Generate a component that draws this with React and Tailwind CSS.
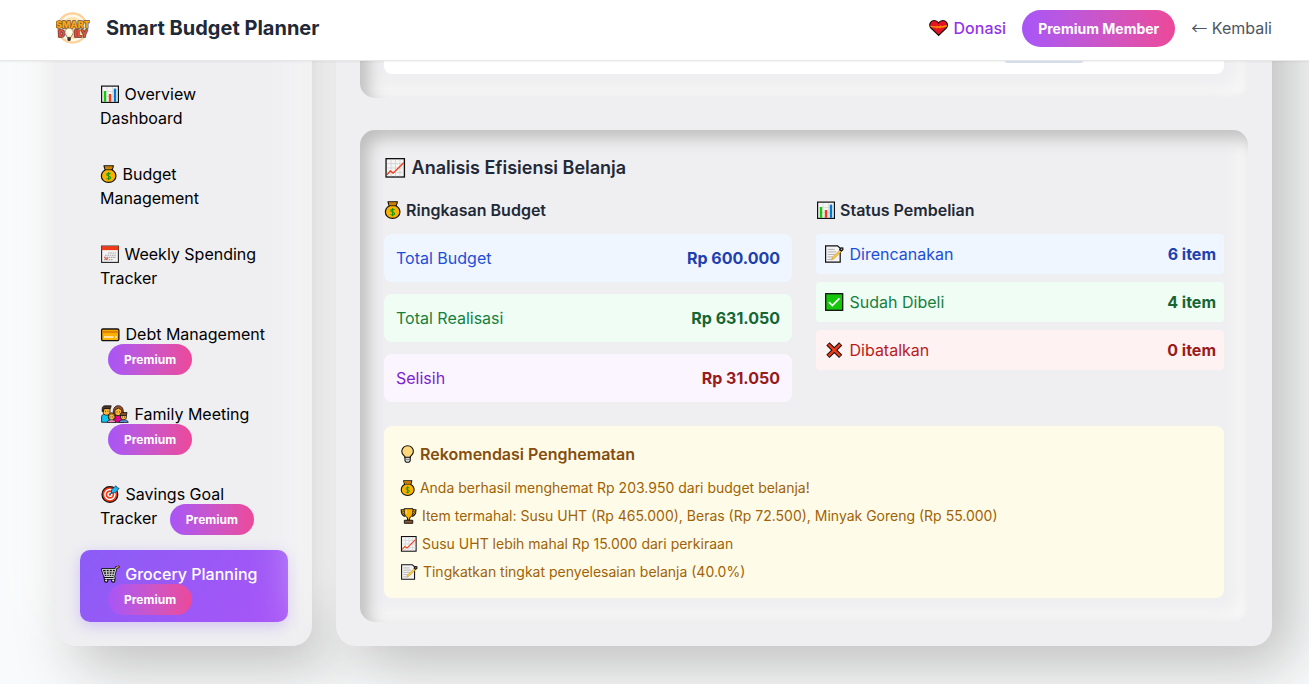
import React from 'react';

function BarChart({ className }) {
  return (
    <svg viewBox="0 0 20 18" className={className} aria-hidden="true">
      <rect x="1.600" y="1.100" width="16.800" height="16.300" fill="#f4f4f4" stroke="#111" strokeWidth="1.200" />
      <path d="M7 2v15M12.500 2v15M2.300 6.500h15.400M2.300 11.500h15.400" stroke="#d5d5d5" strokeWidth="0.700" />
      <rect x="3.800" y="6" width="2.400" height="10.800" fill="#16c60c" />
      <rect x="8.800" y="9" width="2.400" height="7.800" fill="#f03a17" />
      <rect x="13.800" y="3.600" width="2.400" height="13.200" fill="#0078d7" />
    </svg>
  );
}

function MoneyBag({ className }) {
  return (
    <svg viewBox="0 0 18 18" className={className} aria-hidden="true">
      <path d="M4 .8h9.400l-1.300 4.200c2.400 1.300 3.800 3.700 3.800 6.200 0 3.600-3.200 6.200-7.300 6.200s-7.200-2.600-7.200-6.200c0-2.500 1.400-4.900 3.800-6.200z" fill="#fcb100" stroke="#111" strokeWidth="1.200" strokeLinejoin="round" />
      <path d="M4.800 1.500h7.800l-.4 2.200H5.200z" fill="#c77a05" />
      <path d="M5.200 4.700h6.800" stroke="#111" strokeWidth="0.900" />
      <path d="M10.500 9c-.5-.8-3.800-1-3.800.7 0 1.600 3.900 1.200 3.900 3 0 1.700-3.400 1.500-4.100.5M8.600 7v8.200" fill="none" stroke="#12990a" strokeWidth="1.100" />
    </svg>
  );
}

function Calendar({ className }) {
  return (
    <svg viewBox="0 0 20 18" className={className} aria-hidden="true">
      <rect x="1.600" y="1.100" width="16.800" height="16.300" fill="#f2f2f2" stroke="#222" strokeWidth="1.100" />
      <rect x="1.500" y="1.200" width="17" height="3.900" fill="#f03a17" />
      <path d="M8 8h8M5 10.200h11M4 12.400h12M4 14.600h9" stroke="#a5a5a5" strokeWidth="1.100" strokeDasharray="1.600 0.700" />
      <path d="M4.500 11.900l1.600 2.600 2-2" fill="none" stroke="#f0603f" strokeWidth="1.100" />
    </svg>
  );
}

function CreditCard({ className }) {
  return (
    <svg viewBox="0 0 21 18" className={className} aria-hidden="true">
      <rect x="1.600" y="4" width="17.300" height="11.600" rx="1.300" fill="#fcb100" stroke="#111" strokeWidth="1.300" />
      <rect x="2.300" y="5.800" width="15.900" height="2.300" fill="#dd8500" />
      <path d="M4 12h9.500M15 12h2" stroke="#fff4cf" strokeWidth="1.700" />
    </svg>
  );
}

function Family({ className }) {
  return (
    <svg viewBox="0 0 30 18" className={className} aria-hidden="true">
      <g stroke="#111" strokeWidth="0.800">
        <path d="M1.600 17.300v-5.500c0-1.600 1.200-2.600 3-2.600h5v8.100z" fill="#0fc4f0" />
        <path d="M13 17.300V10.500h11v6.800z" fill="#e3008c" />
        <path d="M3.200 3.500h6.800v3.700c0 1.900-1.500 3-3.400 3s-3.400-1.100-3.400-3z" fill="#ffb73b" />
        <path d="M2.200 6.500V3.500C2.200 1.800 3.500 .8 5 .8h6.200l-.8 2.800H4.200L3.400 6.500z" fill="#4b3326" />
        <path d="M13.600 9C12.400 4 14.800 .7 18.300 .7s5.900 3.300 4.700 8.300z" fill="#a0522d" />
        <path d="M14.900 5l3.400-1.900L21.700 5v2.900c0 1.700-1.400 2.700-3.400 2.700s-3.400-1-3.400-2.700z" fill="#ffb73b" />
        <path d="M7.300 17.400c0-3.600 8.600-3.600 8.600 0z" fill="#f59ac0" />
        <path d="M8.400 13.800v-2.300c0-2.700 1.500-3.700 3.300-3.700s3.300 1 3.300 3.700v2.300z" fill="#c9772b" />
        <ellipse cx="11.700" cy="12" rx="2.600" ry="2.800" fill="#ffb73b" strokeWidth="0.300" />
        <path d="M19 17.400c0-3.600 9.200-3.600 9.200 0z" fill="#5a9cf0" />
        <path d="M20.600 10h5.800v2c0 1.800-1.300 2.700-2.900 2.700s-2.900-.9-2.900-2.700z" fill="#ffb73b" />
        <path d="M20.200 10.600V9.500c0-1.300 .9-2 2.100-2h4.700l-.6 2.800z" fill="#87502a" />
      </g>
      <path d="M5.200 6.300h.8M7.500 6.300h.8M16.700 6.900h.8M19 6.900h.8M10.600 12h.6M12.300 12h.6M22.200 12h.7M24.200 12h.7" stroke="#111" strokeWidth="0.900" />
    </svg>
  );
}

function Target({ className }) {
  return (
    <svg viewBox="0 0 21 18" className={className} aria-hidden="true">
      <circle cx="9.900" cy="9.500" r="7.900" fill="#f03a17" stroke="#111" strokeWidth="1.200" />
      <circle cx="9.900" cy="9.500" r="5" fill="#f03a17" stroke="#fff" strokeWidth="1.400" />
      <circle cx="9.900" cy="9.500" r="1.900" fill="#f03a17" stroke="#fff" strokeWidth="1.400" />
      <path d="M9.900 9.500l4-4" stroke="#0b6ea8" strokeWidth="1.200" />
      <path d="M11.300 8.100l.4-3.600L16 .8l.9 1.800 2.200.8-3.700 4.200z" fill="#20b8f3" stroke="#0a3f60" strokeWidth="0.800" />
    </svg>
  );
}

function Cart({ className }) {
  return (
    <svg viewBox="0 0 21 18" className={className} aria-hidden="true">
      <path d="M18.400 1.900l-2.200.5-2.400 9.100H4.600L2.200 4.400h13.300M3.500 6.800h11.300M4.200 9.300h10M6 4.500l1 6.500M9.200 4.500v6.500M12.500 4.500l-.8 6.500M13.800 11.500l.6 2H4.800" fill="none" stroke="#111" strokeWidth="2.600" strokeLinejoin="round" strokeLinecap="round" />
      <circle cx="6.200" cy="15.500" r="2.200" fill="#111" />
      <circle cx="13.200" cy="15.500" r="2.200" fill="#111" />
      <path d="M18.400 1.900l-2.200.5-2.400 9.100H4.600L2.200 4.400h13.300M3.500 6.800h11.300M4.200 9.300h10M6 4.500l1 6.500M9.200 4.500v6.500M12.500 4.500l-.8 6.500M13.800 11.500l.6 2H4.800" fill="none" stroke="#d6d6d6" strokeWidth="1" />
      <circle cx="6.200" cy="15.500" r="1.100" fill="#e8e8e8" />
      <circle cx="13.200" cy="15.500" r="1.100" fill="#e8e8e8" />
      <path d="M17.200 2l1.500-.3" stroke="#f0603f" strokeWidth="1.400" />
    </svg>
  );
}

function TrendChart({ className }) {
  return (
    <svg viewBox="0 0 20 18" className={className} aria-hidden="true">
      <rect x="1.500" y="0.600" width="16.500" height="16.500" fill="#f4f4f4" stroke="#111" strokeWidth="1.200" />
      <path d="M6 1.500v15M10 1.500v15M14 1.500v15M2.300 5h15.200M2.300 9h15.200M2.300 13h15.200" stroke="#cfcfcf" strokeWidth="0.700" />
      <path d="M2.300 15.200l3-3.500 2.500 1.900L17.400 4.200" fill="none" stroke="#f03a17" strokeWidth="1.200" />
    </svg>
  );
}

function Memo({ className }) {
  return (
    <svg viewBox="0 0 21 18" className={className} aria-hidden="true">
      <path d="M1.600 .8h12l2.600 2.400v14H1.600z" fill="#f4f4f4" stroke="#111" strokeWidth="1.200" />
      <path d="M3.600 4.400h7M3.600 6.900h8.500M3.600 9.400h7M3.600 11.900h5M3.600 14.400h3.500" stroke="#b0b0b0" strokeWidth="1" />
      <path d="M7.400 15l1-2.800 8.400-8.100 1.500 1.500-8.300 8.200z" fill="#ffc83d" stroke="#9a7420" strokeWidth="0.400" />
      <path d="M15.800 4.600l1.300-1.700 1.700.1.100 1.700-1.600 1.300z" fill="#d9a3a3" stroke="#111" strokeWidth="1.200" />
    </svg>
  );
}

function Check({ className }) {
  return (
    <svg viewBox="0 0 21 18" className={className} aria-hidden="true">
      <rect x="1.700" y="0.700" width="17" height="16.600" fill="#16c60c" stroke="#111" strokeWidth="1.300" />
      <path d="M5 9.200l3.300 3.300L15.400 5.300" fill="none" stroke="#fff" strokeWidth="1.700" />
    </svg>
  );
}

function Cross({ className }) {
  return (
    <svg viewBox="0 0 21 18" className={className} aria-hidden="true">
      <path d="M3.900 2.800l12.800 12.600M16.700 2.800L3.900 15.400" stroke="#111" strokeWidth="4.600" />
      <path d="M4.400 3.300l11.800 11.600M16.200 3.300L4.400 14.900" stroke="#f03a17" strokeWidth="2.500" />
    </svg>
  );
}

function Bulb({ className }) {
  return (
    <svg viewBox="0 0 16 18" className={className} aria-hidden="true">
      <path d="M5.100 12.600C4.900 10.700 1.800 9.700 1.800 6.400 1.800 3.200 4.400 .8 7.600 .8s5.800 2.400 5.800 5.600c0 3.300-3.100 4.300-3.300 6.200z" fill="#ffd679" stroke="#111" strokeWidth="1.100" />
      <path d="M5 12.300h5.200v3.500L9 17.300H6.200L5 15.800z" fill="#d8d8d8" stroke="#111" strokeWidth="1.100" />
      <path d="M5.600 14.500h4" stroke="#777" strokeWidth="0.800" />
    </svg>
  );
}

function Trophy({ className }) {
  return (
    <svg viewBox="0 0 20 18" className={className} aria-hidden="true">
      <path d="M5 2.600H1.900c0 3.800 1 5.700 4 6.200M14 2.600h3.100c0 3.800-1 5.700-4 6.200" fill="none" stroke="#111" strokeWidth="2.600" />
      <path d="M5 2.800H2.300c0 3.400 1 5 3.600 5.600M14 2.800h2.700c0 3.400-1 5-3.600 5.600" fill="none" stroke="#fcb100" strokeWidth="0.900" />
      <path d="M4.500 .8h10c0 5.700-.8 9-3.800 10v2.700H8.300v-2.700c-3-1-3.800-4.300-3.800-10z" fill="#fcb100" stroke="#111" strokeWidth="1.100" />
      <path d="M6.800 2v4.500" stroke="#ffe08a" strokeWidth="1.200" />
      <path d="M4.800 17.200v-3.400h9.400v3.400z" fill="#8e562e" stroke="#111" strokeWidth="1.100" />
    </svg>
  );
}

function GiftHeart({ className }) {
  return (
    <svg viewBox="0 0 20 18" className={className} aria-hidden="true">
      <path d="M9.600 16.400L1.700 8.800C-.5 5.700 1.500 1.500 5.200 1.500c1.900 0 3.400 .9 4.400 2.400 1-1.500 2.500-2.400 4.400-2.400 3.700 0 5.700 4.200 3.500 7.300z" fill="#e81224" stroke="#111" strokeWidth="1.200" />
      <path d="M1.300 6.600c3 1 5 1 8.300 .8s5.400-.4 8.300-1.300l-.2 1.600c-3 .8-4.900 1-8.100 1.100s-5 .2-7.900-.7z" fill="#fc9a00" />
      <path d="M7.400 6.600l2.200 1.200L12 6.300l-.3 3.300-2.100-1-2.200 1.200z" fill="#f58a07" />
    </svg>
  );
}

function Logo() {
  return (
    <svg viewBox="0 0 34 34" className="h-[34px] w-[34px]" role="img" aria-label="Smart Daily">
      <circle cx="16.500" cy="17" r="14.600" fill="#fff8e8" stroke="#fbd197" strokeWidth="2.200" />
      <circle cx="16.500" cy="17" r="11" fill="#fde3b4" />
      <g fontFamily="Inter, sans-serif" fontWeight="900" fontSize="9" textAnchor="middle" strokeWidth="1.400" paintOrder="stroke" strokeLinejoin="round">
        <text x="17" y="17" fill="#f9a51a" stroke="#6b4c2e">SMART</text>
        <text x="5.500" y="26" fill="#e2533f" stroke="#5f3a38">D</text>
        <text x="25" y="26" fill="#e2533f" stroke="#5f3a38">ILY</text>
      </g>
      <path d="M11.300 26.400c-.2-2-2.400-2.600-2.400-5.200a4.200 4.200 0 0 1 8.400 0c0 2.600-2.200 3.200-2.400 5.200z" fill="#fffbe6" stroke="#a8733a" strokeWidth="0.900" />
      <path d="M11.400 26.200h3.400v2.700l-.9 1.100h-1.600l-.9-1.100z" fill="#3d3530" />
    </svg>
  );
}

function PremiumTag() {
  return (
    <span className="ml-2 rounded-full bg-linear-to-r from-[#a855f7] to-[#ec4899] px-4 py-2 text-[12px] leading-4 font-bold text-white">
      Premium
    </span>
  );
}

const menu = [
  { Icon: BarChart, size: 'w-5', label: 'Overview Dashboard' },
  { Icon: MoneyBag, size: 'w-[18px]', label: 'Budget Management' },
  { Icon: Calendar, size: 'w-5', label: 'Weekly Spending Tracker' },
  { Icon: CreditCard, size: 'w-[21px]', label: 'Debt Management', premium: true },
  { Icon: Family, size: 'w-[30px]', label: 'Family Meeting', premium: true },
  { Icon: Target, size: 'w-[21px]', label: 'Savings Goal Tracker', premium: true },
  { Icon: Cart, size: 'w-[21px]', label: 'Grocery Planning', premium: true, active: true },
];

const summary = [
  { label: 'Total Budget', value: 'Rp 600.000', box: 'bg-[#eff6ff]', text: 'text-[#1d4ed8]', strong: 'text-[#1e40af]' },
  { label: 'Total Realisasi', value: 'Rp 631.050', box: 'bg-[#f0fdf4]', text: 'text-[#15803d]', strong: 'text-[#166534]' },
  { label: 'Selisih', value: 'Rp 31.050', box: 'bg-[#faf5ff]', text: 'text-[#7e22ce]', strong: 'text-[#991b1b]' },
];

const statuses = [
  { Icon: Memo, label: 'Direncanakan', value: '6 item', box: 'bg-[#eff6ff]', text: 'text-[#1d4ed8]', strong: 'text-[#1e40af]' },
  { Icon: Check, label: 'Sudah Dibeli', value: '4 item', box: 'bg-[#f0fdf4]', text: 'text-[#15803d]', strong: 'text-[#166534]' },
  { Icon: Cross, label: 'Dibatalkan', value: '0 item', box: 'bg-[#fef2f2]', text: 'text-[#b91c1c]', strong: 'text-[#991b1b]' },
];

const tips = [
  { Icon: MoneyBag, size: 'w-4', text: 'Anda berhasil menghemat Rp 203.950 dari budget belanja!' },
  { Icon: Trophy, size: 'w-[18px]', text: 'Item termahal: Susu UHT (Rp 465.000), Beras (Rp 72.500), Minyak Goreng (Rp 55.000)' },
  { Icon: TrendChart, size: 'w-[18px]', text: 'Susu UHT lebih mahal Rp 15.000 dari perkiraan' },
  { Icon: Memo, size: 'w-[19px]', text: 'Tingkatkan tingkat penyelesaian belanja (40.0%)' },
];

const icon = 'inline-block h-[18px] align-[-3px]';
const raised = 'rounded-[20px] bg-[#efeff1] shadow-[20px_20px_60px_#bebebe,-20px_-20px_60px_#ffffff]';
const sunken = 'rounded-[15px] bg-[#efeff1] p-6 shadow-[inset_8px_8px_16px_#bebebe,inset_-8px_-8px_16px_#f9f9f9]';

function Header() {
  return (
    <header className="sticky top-0 z-10 border-b border-[#e5e7eb] bg-white shadow-[0_1px_2px_rgba(0,0,0,0.05)]">
      <div className="flex h-[60px] items-center justify-between pr-[37px] pb-1 pl-14">
        <div className="flex items-center gap-4">
          <Logo />
          <h1 className="text-[20px] leading-7 font-bold text-[#1f2937]">Smart Budget Planner</h1>
        </div>
        <nav className="flex items-center gap-4">
          <a href="#donasi" className="font-medium text-[#9333ea]">
            <GiftHeart className={`${icon} w-5`} /> Donasi
          </a>
          <span className="rounded-full bg-linear-to-r from-[#a855f7] to-[#ec4899] px-4 py-2 text-[14px] leading-[21px] font-bold text-white">
            Premium Member
          </span>
          <a href="#kembali" className="text-[#4b5563]">
            <span className="font-['Noto_Sans_CJK_SC',sans-serif] leading-4">←</span> Kembali
          </a>
        </nav>
      </div>
    </header>
  );
}

function Sidebar() {
  return (
    <aside className={`${raised} flex w-64 shrink-0 flex-col justify-end p-6`}>
      <nav className="flex flex-col gap-2">
        {menu.map(({ Icon, size, label, premium, active }) => (
          <button
            key={label}
            type="button"
            className={
              active
                ? 'rounded-[10px] bg-linear-135 from-[#8b5cf6] to-[#a855f7] px-5 py-3 text-left font-medium text-white shadow-[0_4px_15px_rgba(139,92,246,0.3)]'
                : 'rounded-[10px] px-5 py-3 text-left text-black'
            }
          >
            <Icon className={`${icon} ${size}`} /> {label} {premium && <PremiumTag />}
          </button>
        ))}
      </nav>
    </aside>
  );
}

function ShoppingList() {
  return (
    <section className={sunken}>
      <div className="flex h-56 flex-col items-end justify-end rounded-lg bg-white pr-[140px] pb-[11px]">
        <div className="h-6 w-20 rounded bg-[#dbe3f3]" />
      </div>
    </section>
  );
}

function Analysis() {
  return (
    <section className={sunken}>
      <h3 className="mb-4 text-[18px] leading-7 font-semibold text-[#1f2937]">
        <TrendChart className="inline-block h-5 w-[23px] align-[-4px]" /> Analisis Efisiensi Belanja
      </h3>
      <div className="grid grid-cols-2 gap-6">
        <div>
          <h4 className="mb-3 font-semibold text-[#1f2937]">
            <MoneyBag className={`${icon} w-[18px]`} /> Ringkasan Budget
          </h4>
          <dl className="flex flex-col gap-3">
            {summary.map((row) => (
              <div key={row.label} className={`flex justify-between rounded-lg p-3 ${row.box}`}>
                <dt className={row.text}>{row.label}</dt>
                <dd className={`font-bold ${row.strong}`}>{row.value}</dd>
              </div>
            ))}
          </dl>
        </div>
        <div>
          <h4 className="mb-3 font-semibold text-[#1f2937]">
            <BarChart className={`${icon} w-5`} /> Status Pembelian
          </h4>
          <dl className="flex flex-col gap-2">
            {statuses.map(({ Icon, ...row }) => (
              <div key={row.label} className={`flex justify-between rounded p-2 ${row.box}`}>
                <dt className={row.text}>
                  <Icon className={`${icon} w-[21px]`} /> {row.label}
                </dt>
                <dd className={`font-bold ${row.strong}`}>{row.value}</dd>
              </div>
            ))}
          </dl>
        </div>
      </div>
      <div className="mt-6 rounded-lg bg-[#fefce8] p-4">
        <h4 className="mb-3 font-semibold text-[#854d0e]">
          <Bulb className={`${icon} w-4`} /> Rekomendasi Penghematan
        </h4>
        <ul className="flex flex-col gap-2 text-[14px] leading-5 text-[#a16207]">
          {tips.map(({ Icon, size, text }) => (
            <li key={text}>
              <Icon className={`inline-block h-4 align-[-3px] ${size}`} /> {text}
            </li>
          ))}
        </ul>
      </div>
    </section>
  );
}

export default function App() {
  return (
    <div className="min-h-screen overflow-x-clip bg-[#f9fafb] font-['Inter',sans-serif] text-[16px] leading-6">
      <Header />
      <div className="-mt-[259px] flex gap-6 pr-[37px] pb-9 pl-14">
        <Sidebar />
        <main className={`${raised} flex min-w-0 grow flex-col gap-8 p-6`}>
          <ShoppingList />
          <Analysis />
        </main>
      </div>
    </div>
  );
}
